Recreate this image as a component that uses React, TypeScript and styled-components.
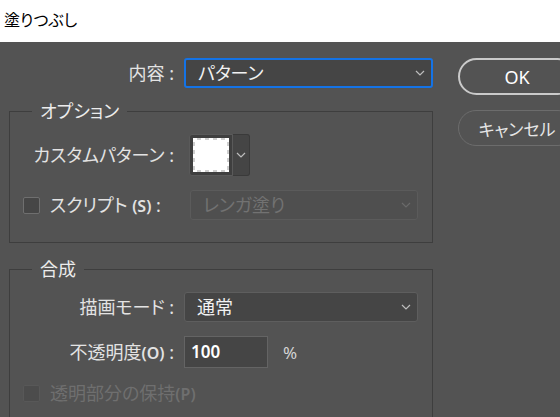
import styled, { createGlobalStyle } from 'styled-components'

const GlobalStyle = createGlobalStyle`
  html, body {
    margin: 0;
    padding: 0;
    background: #535353;
    overflow: hidden;
  }
  body {
    font-family: "Noto Sans", "Noto Sans CJK JP", sans-serif;
    font-feature-settings: "palt";
  }
`

const Chevron = ({ color = '#bdbdbd' }: { color?: string }) => (
  <svg width="10" height="6" viewBox="0 0 10 6">
    <polyline points="1,1 5,5 9,1" fill="none" stroke={color} strokeWidth="1.2" />
  </svg>
)

const App = () => {
  return (
    <Window>
      <GlobalStyle />
      <TitleBar>塗りつぶし</TitleBar>
      <Body>
        <LeftCol>
          <Row>
            <Label $w={165}>内容 :</Label>
            <Select $w={249} $focus>
              <SelectText>パターン</SelectText>
              <Chevron />
            </Select>
          </Row>

          <Group>
            <Legend>オプション</Legend>
            <GroupInner>
              <Row $h={42}>
                <Label $w={164} $gap={15}>カスタムパターン :</Label>
                <Swatch>
                  <Checker>
                    <WhiteFill />
                  </Checker>
                </Swatch>
                <SwatchDrop>
                  <Chevron />
                </SwatchDrop>
              </Row>
              <Row $mt={14}>
                <Check />
                <CheckLabel $w={130}>
                  スクリプト <Latin>(S)</Latin> :
                </CheckLabel>
                <Select $w={228} $disabled>
                  <SelectText $disabled>レンガ塗り</SelectText>
                  <Chevron color="#6a6a6a" />
                </Select>
              </Row>
            </GroupInner>
          </Group>

          <Group $mt={15}>
            <Legend>合成</Legend>
            <GroupInner>
              <Row>
                <Label $w={164}>描画モード :</Label>
                <Select $w={234}>
                  <SelectText>通常</SelectText>
                  <Chevron />
                </Select>
              </Row>
              <Row $mt={14} $h={32}>
                <Label $w={164}>
                  不透明度<Latin>(O)</Latin> :
                </Label>
                <NumberBox>100</NumberBox>
                <Unit>%</Unit>
              </Row>
              <Row $mt={17} $h={17}>
                <Check $disabled />
                <CheckLabel $disabled>
                  透明部分の保持<Latin>(P)</Latin>
                </CheckLabel>
              </Row>
            </GroupInner>
          </Group>
        </LeftCol>

        <RightCol>
          <Button $primary>OK</Button>
          <Button>キャンセル</Button>
        </RightCol>
      </Body>
    </Window>
  )
}

export default App

const Window = styled.div`
  width: 560px;
  height: 417px;
  background: #535353;
  overflow: hidden;
`
const TitleBar = styled.div`
  height: 42px;
  background: #fff;
  color: #000;
  font-size: 16px;
  line-height: 40px;
  padding-left: 4px;
`
const Body = styled.div`
  display: flex;
  padding-top: 16px;
  column-gap: 25px;
`
const LeftCol = styled.div`
  display: flex;
  flex-direction: column;
  width: 424px;
  margin-left: 9px;
  flex-shrink: 0;
`
const RightCol = styled.div`
  display: flex;
  flex-direction: column;
  row-gap: 15px;
  width: 118px;
  flex-shrink: 0;
`
const Row = styled.div<{ $h?: number; $mt?: number }>`
  display: flex;
  align-items: center;
  height: ${p => p.$h ?? 30}px;
  margin-top: ${p => p.$mt ?? 0}px;
`
const Label = styled.div<{ $w: number; $gap?: number }>`
  width: ${p => p.$w}px;
  margin-right: ${p => p.$gap ?? 10}px;
  text-align: right;
  color: #e3e3e3;
  font-size: 18px;
  line-height: 22px;
  white-space: nowrap;
`
const Latin = styled.span`
  font-size: 16px;
  font-weight: 600;
`
const Select = styled.div<{ $w: number; $focus?: boolean; $disabled?: boolean }>`
  box-sizing: border-box;
  display: flex;
  align-items: center;
  justify-content: space-between;
  width: ${p => p.$w}px;
  height: 30px;
  padding: 0 6px 0 12px;
  border-radius: 3px;
  background: ${p => (p.$disabled ? '#4f4f4f' : '#454545')};
  border: ${p =>
    p.$focus ? '2px solid #1473e6' : p.$disabled ? '1px solid #5b5b5b' : '1px solid #5e5e5e'};
`
const SelectText = styled.span<{ $disabled?: boolean }>`
  color: ${p => (p.$disabled ? '#727272' : '#f2f2f2')};
  font-size: 18px;
  line-height: 22px;
`
const Group = styled.fieldset<{ $mt?: number }>`
  box-sizing: border-box;
  width: 424px;
  margin: ${p => p.$mt ?? 12}px 0 0 0;
  padding: 0;
  border: 1px solid #3e3e3e;
  min-inline-size: 0;
`
const Legend = styled.legend`
  margin-left: 22px;
  padding: 0 8px;
  color: #ececec;
  font-size: 18px;
  line-height: 22px;
`
const GroupInner = styled.div`
  padding: 12px 0 22px 0;
`
const Swatch = styled.div`
  box-sizing: border-box;
  width: 44px;
  height: 42px;
  padding: 3px;
  background: #3f3f3f;
  border: 1px solid #5a5a5a;
  border-radius: 3px 0 0 3px;
`
const Checker = styled.div`
  width: 100%;
  height: 100%;
  padding: 2px;
  box-sizing: border-box;
  background: repeating-conic-gradient(#cfcfcf 0 25%, #ffffff 0 50%) 0 0 / 8px 8px;
`
const WhiteFill = styled.div`
  width: 100%;
  height: 100%;
  background: #fff;
`
const SwatchDrop = styled.div`
  box-sizing: border-box;
  display: flex;
  align-items: center;
  justify-content: center;
  width: 17px;
  height: 42px;
  background: #454545;
  border: 1px solid #3a3a3a;
  border-left: none;
  border-radius: 0 3px 3px 0;
`
const Check = styled.div<{ $disabled?: boolean }>`
  box-sizing: border-box;
  width: 17px;
  height: 17px;
  margin-left: 13px;
  border-radius: 2px;
  background: ${p => (p.$disabled ? '#4c4c4c' : '#464646')};
  border: 1px solid ${p => (p.$disabled ? '#585858' : '#6f6f6f')};
  flex-shrink: 0;
`
const CheckLabel = styled.div<{ $disabled?: boolean; $w?: number }>`
  ${p => (p.$w ? `width: ${p.$w}px;` : '')}
  margin: 0 10px;
  color: ${p => (p.$disabled ? '#6f6f6f' : '#e3e3e3')};
  font-size: 18px;
  line-height: 22px;
  white-space: nowrap;
`
const NumberBox = styled.div`
  box-sizing: border-box;
  width: 84px;
  height: 32px;
  padding-left: 6px;
  background: #454545;
  border: 1px solid #646464;
  color: #ffffff;
  font-size: 17px;
  font-weight: 600;
  line-height: 30px;
`
const Unit = styled.span`
  margin-left: 15px;
  color: #d4d4d4;
  font-size: 17px;
`
const Button = styled.div<{ $primary?: boolean }>`
  box-sizing: border-box;
  display: flex;
  align-items: center;
  justify-content: center;
  width: 118px;
  height: ${p => (p.$primary ? 37 : 36)}px;
  border-radius: 19px;
  border: ${p => (p.$primary ? '2px solid #cacaca' : '1px solid #6c6c6c')};
  color: ${p => (p.$primary ? '#ffffff' : '#e6e6e6')};
  font-size: ${p => (p.$primary ? 18 : 17)}px;
`
